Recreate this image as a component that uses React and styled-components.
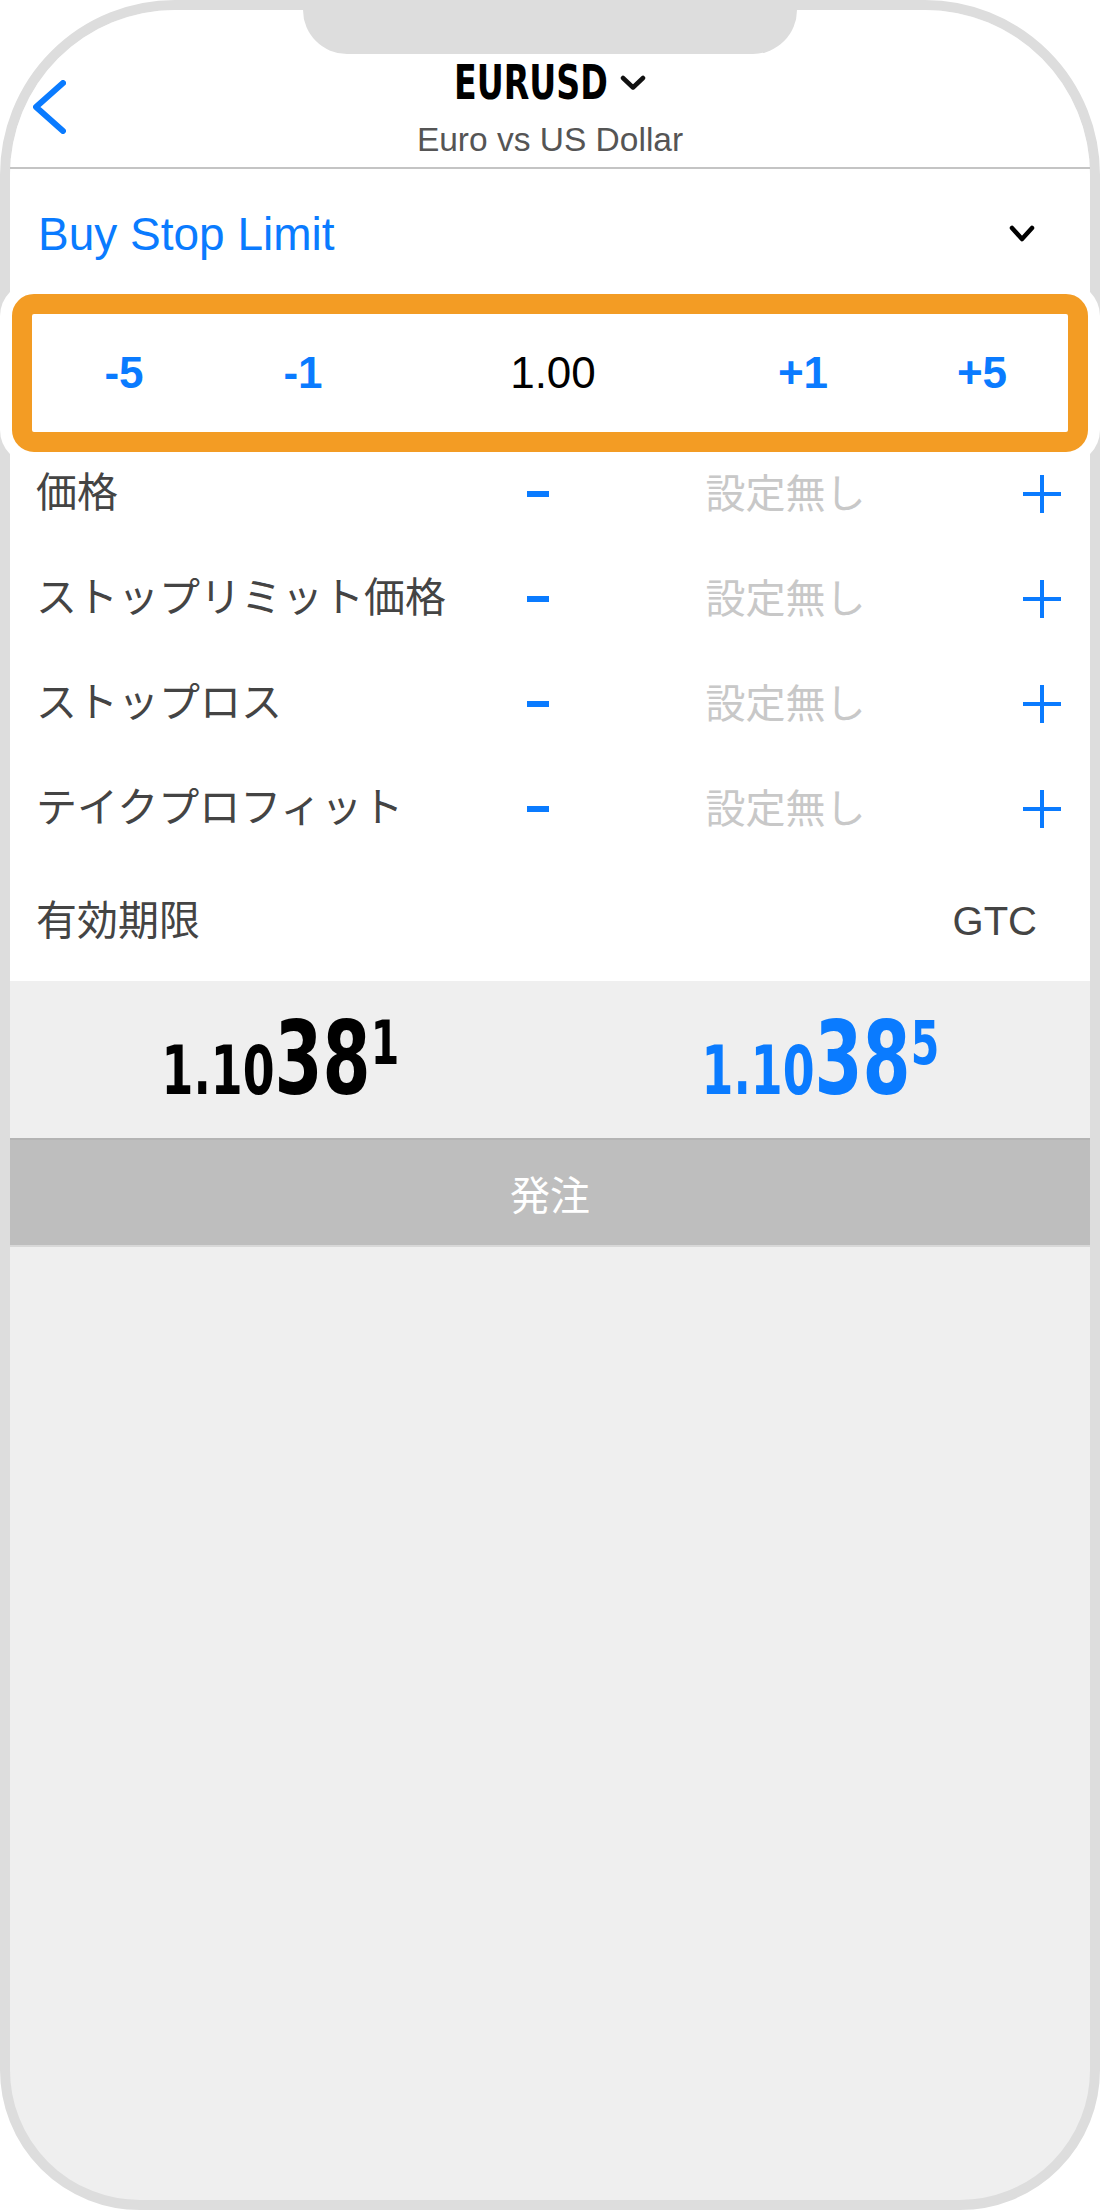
import React from 'react';
import styled, { createGlobalStyle } from 'styled-components';

const BLUE = '#0a7bff';
const CONDENSED = '"DejaVu Sans Condensed", "DejaVu Sans", sans-serif';
const JP = '"Liberation Sans", "Noto Sans CJK JP", sans-serif';

const GlobalStyle = createGlobalStyle`
  html, body {
    margin: 0;
    padding: 0;
    background: #fff;
  }
  body {
    font-family: "Liberation Sans", Arial, sans-serif;
  }
  * {
    box-sizing: border-box;
  }
`;

const params = [
  { label: '価格' },
  { label: 'ストップリミット価格' },
  { label: 'ストップロス' },
  { label: 'テイクプロフィット' },
];

const steps = [
  { text: '-5', accent: true },
  { text: '-1', accent: true },
  { text: '1.00' },
  { text: '+1', accent: true },
  { text: '+5', accent: true },
];

export default function App() {
  return (
    <>
      <GlobalStyle />
      <Frame>
        <Notch />
        <Screen>
          <Header>
            <BackButton>
              <svg width="33" height="54" viewBox="0 0 33 54">
                <path d="M30 3 L3 27 L30 51" fill="none" stroke={BLUE} strokeWidth="6" strokeLinecap="round" strokeLinejoin="round" />
              </svg>
            </BackButton>
            <TitleBlock>
              <TitleRow>
                <Title>EURUSD</Title>
                <svg width="26" height="16" viewBox="0 0 26 16">
                  <path d="M3 3 L13 12.5 L23 3" fill="none" stroke="#111" strokeWidth="4.5" strokeLinecap="round" strokeLinejoin="round" />
                </svg>
              </TitleRow>
              <Subtitle>Euro vs US Dollar</Subtitle>
            </TitleBlock>
          </Header>

          <OrderType>
            <OrderTypeLabel>Buy Stop Limit</OrderTypeLabel>
            <svg width="26" height="18" viewBox="0 0 26 18">
              <path d="M3 3 L13 14 L23 3" fill="none" stroke="#000" strokeWidth="4.5" strokeLinecap="round" strokeLinejoin="round" />
            </svg>
          </OrderType>

          <StepperBox>
            {steps.map((s) => (
              <Step key={s.text} $accent={s.accent}>{s.text}</Step>
            ))}
          </StepperBox>

          <ParamList>
            {params.map((p) => (
              <ParamRow key={p.label}>
                <ParamLabel>{p.label}</ParamLabel>
                <IconCell>
                  <svg width="22" height="6" viewBox="0 0 22 6">
                    <rect x="0" y="0" width="22" height="6" fill={BLUE} />
                  </svg>
                </IconCell>
                <ParamValue>設定無し</ParamValue>
                <IconCell>
                  <svg width="38" height="38" viewBox="0 0 38 38">
                    <path d="M19 0 V38 M0 19 H38" stroke={BLUE} strokeWidth="4" />
                  </svg>
                </IconCell>
              </ParamRow>
            ))}
            <ExpiryRow>
              <ParamLabel>有効期限</ParamLabel>
              <ExpiryValue>GTC</ExpiryValue>
            </ExpiryRow>
          </ParamList>
        </Screen>

        <PricePanel>
          <Quote>
            <QuoteSmall>1.10</QuoteSmall>
            <QuoteBig>38</QuoteBig>
            <QuoteSup>1</QuoteSup>
          </Quote>
          <Quote $color={BLUE}>
            <QuoteSmall>1.10</QuoteSmall>
            <QuoteBig>38</QuoteBig>
            <QuoteSup>5</QuoteSup>
          </Quote>
        </PricePanel>

        <OrderButton>発注</OrderButton>
      </Frame>
    </>
  );
}

const Frame = styled.div`
  position: relative;
  width: 1100px;
  height: 2210px;
  border: 10px solid #dddddd;
  border-radius: 175px 175px 140px 140px;
  background: #efefef;
  display: flex;
  flex-direction: column;
`;

const Notch = styled.div`
  position: absolute;
  top: 0;
  left: 293px;
  width: 494px;
  height: 44px;
  background: #dddddd;
  border-radius: 0 0 46px 46px;
  z-index: 2;
`;

const Screen = styled.div`
  background: #fff;
  border-radius: 165px 165px 0 0;
`;

const Header = styled.header`
  display: grid;
  grid-template-columns: 1fr auto 1fr;
  height: 159px;
  padding-top: 48px;
  border-bottom: 2px solid #c4c4c4;
`;

const BackButton = styled.div`
  align-self: center;
  justify-self: start;
  margin-left: 23px;
  margin-top: -12px;
  display: flex;
`;

const TitleBlock = styled.div`
  display: flex;
  flex-direction: column;
  align-items: center;
`;

const TitleRow = styled.div`
  display: flex;
  align-items: center;
  gap: 12px;
`;

const Title = styled.span`
  display: inline-block;
  font-family: ${CONDENSED};
  font-weight: 700;
  font-size: 48px;
  line-height: 49px;
  color: #000;
  transform: scaleX(0.77);
  transform-origin: left center;
  margin-right: -45px;
`;

const Subtitle = styled.div`
  margin-top: 16px;
  font-size: 33.5px;
  line-height: 33.5px;
  color: #555;
`;

const OrderType = styled.div`
  display: flex;
  align-items: center;
  justify-content: space-between;
  height: 125px;
  padding: 5px 55px 0 28px;
`;

const OrderTypeLabel = styled.span`
  font-size: 46px;
  line-height: 1;
  color: ${BLUE};
`;

const StepperBox = styled.div`
  position: relative;
  z-index: 1;
  margin: 0 2px;
  height: 158px;
  border: 20px solid #f39c24;
  border-radius: 22px;
  background: #fff;
  box-shadow: 0 0 0 12px #fff;
  display: grid;
  grid-template-columns: 172px 186px 1fr 186px 172px;
  align-items: center;
  justify-items: center;
  padding-left: 6px;
`;

const Step = styled.span`
  font-size: 44px;
  line-height: 1;
  font-weight: ${(p) => (p.$accent ? 700 : 400)};
  color: ${(p) => (p.$accent ? BLUE : '#000')};
`;

const ParamList = styled.div`
  margin-top: -11px;
`;

const ParamRow = styled.div`
  display: grid;
  grid-template-columns: 470px 64px 1fr 56px;
  align-items: center;
  height: 105px;
  padding: 0 20px 0 26px;
`;

const ParamLabel = styled.span`
  font-family: ${JP};
  font-size: 41px;
  line-height: 1;
  color: #444;
  white-space: nowrap;
`;

const IconCell = styled.div`
  display: flex;
  justify-content: center;
  align-items: center;
`;

const ParamValue = styled.span`
  justify-self: center;
  padding-right: 13px;
  font-family: ${JP};
  font-size: 40px;
  line-height: 1;
  color: #c8c8c8;
`;

const ExpiryRow = styled.div`
  display: flex;
  align-items: center;
  justify-content: space-between;
  height: 120px;
  padding: 0 53px 0 26px;
`;

const ExpiryValue = styled.span`
  font-size: 40px;
  line-height: 1;
  color: #444;
`;

const PricePanel = styled.div`
  display: grid;
  grid-template-columns: 1fr 1fr;
  align-items: center;
  justify-items: center;
  height: 157px;
  background: #efefef;
`;

const Quote = styled.div`
  font-family: ${CONDENSED};
  font-weight: 700;
  line-height: 1;
  white-space: nowrap;
  color: ${(p) => p.$color || '#000'};
  transform: scaleX(0.76);
  transform-origin: center;
`;

const QuoteSmall = styled.span`
  font-size: 67px;
`;

const QuoteBig = styled.span`
  font-size: 101px;
`;

const QuoteSup = styled.span`
  font-size: 60px;
  vertical-align: 30px;
`;

const OrderButton = styled.div`
  display: flex;
  align-items: center;
  justify-content: center;
  height: 109px;
  background: #bebebe;
  border-top: 2px solid #b4b4b4;
  border-bottom: 2px solid #d8d8d8;
  color: #fff;
  font-family: ${JP};
  font-size: 40px;
`;
